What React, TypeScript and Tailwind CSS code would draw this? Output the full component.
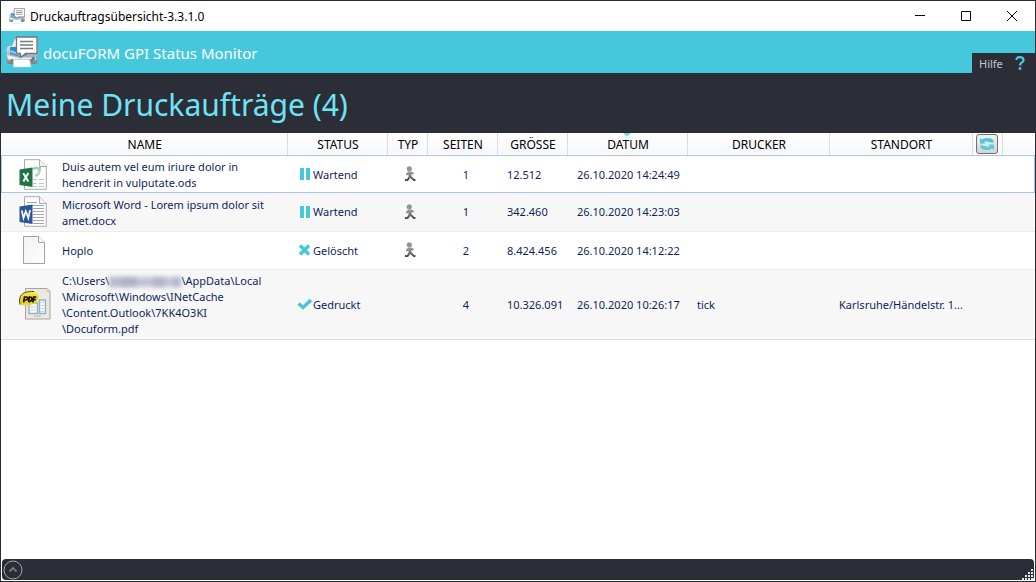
import type { ReactNode } from 'react';

function PrinterIcon({ className }: { className: string }) {
  return (
    <svg viewBox="0 0 32 32" className={className} aria-hidden="true">
      <defs>
        <linearGradient id="printerBody" x1="0" y1="0" x2="0" y2="1">
          <stop offset="0" stopColor="#dfe1e4" />
          <stop offset="0.5" stopColor="#b4b8bd" />
          <stop offset="1" stopColor="#7c8085" />
        </linearGradient>
      </defs>
      <path d="M6 10 9 3h5v9Z" fill="#f1f1f1" stroke="#c3c6c9" strokeWidth="0.6" />
      <path d="M0.500 14Q0.500 10 4 10h24q3.500 0 3.500 4V25q0 3-3 3H3.500q-3 0-3-3Z" fill="url(#printerBody)" />
      <path d="M4 11h17v8l-6 2-11-3Z" fill="#2b8fca" />
      <path d="M3.500 16 14 20l-1-3-8-3Z" fill="#8ccbe9" />
      <path d="M1 19 12 21.500h18v2H2Z" fill="#eceef0" />
      <path d="M5 23.500h22v1.800H5Z" fill="#6a6e73" />
      <path d="M7.500 23.500h16l1.500 7.500h-17.500Z" fill="#ffffff" stroke="#cfd2d5" strokeWidth="0.600" />
      <circle cx="27.300" cy="22.500" r="1.700" fill="#2a8fc5" />
      <path d="M10.500 1h20.500v16.500H19.500L14.500 21.500v-4h-4Z" fill="#ffffff" stroke="#73777b" strokeWidth="1.300" />
      <path d="M14 5.500h13M14 9h13M14 12.500h13" stroke="#777b80" strokeWidth="1.500" />
    </svg>
  );
}

function PageOutline() {
  return (
    <>
      <path d="M5.500 0.700H20.500L27.300 7.500V30.300H5.500Z" fill="#ffffff" stroke="#ababab" />
      <path d="M20.500 0.700V7.500H27.300" fill="#f4f4f4" stroke="#ababab" />
    </>
  );
}

function SheetIcon() {
  return (
    <svg viewBox="0 0 28 31" className="h-[31px] w-7" role="img" aria-label="Tabelle">
      <PageOutline />
      <path d="M14 20.500h4M14 24.500h4M14 27.500h4M20 20.500h5M20 24.500h5M20 27.500h5" stroke="#c3c3c3" />
      <path d="M14 10.500q3-3.500 6 0" fill="none" stroke="#9bd3b2" strokeWidth="2.400" />
      <path d="M19.500 9.500q2.500 5.500-3.500 7.500" fill="none" stroke="#a9dcc0" strokeWidth="2.400" />
      <path d="M17 8h5v5Z" fill="#9bd3b2" />
      <path d="M0.500 10.500 13.500 8.500V28L0.500 26Z" fill="#217346" />
      <path d="m4.300 14.200 5 8.200m0-8.500-5 8.500" stroke="#ffffff" strokeWidth="2" />
    </svg>
  );
}

function WordIcon() {
  return (
    <svg viewBox="0 0 28 31" className="h-[31px] w-7" role="img" aria-label="Dokument">
      <PageOutline />
      <path d="M8 6.500h10M8 9.500h17M14 12.500h11M14 15.500h11M14 18.500h11M14 21.500h11M14 24.500h11M14 27.500h11" stroke="#a5a5a5" />
      <path d="M0.500 10.500 13.500 8.500V28L0.500 26Z" fill="#2b579a" />
      <path d="m2.800 14.500 1.700 7.600 2.300-6.800 2.500 6.800 1.700-8" fill="none" stroke="#ffffff" strokeWidth="1.700" />
    </svg>
  );
}

function BlankIcon() {
  return (
    <svg viewBox="0 0 28 31" className="h-[31px] w-7" role="img" aria-label="Datei">
      <defs>
        <linearGradient id="blankPage" x1="0" y1="0" x2="1" y2="1">
          <stop offset="0" stopColor="#f1f2f4" />
          <stop offset="1" stopColor="#fdfdfd" />
        </linearGradient>
      </defs>
      <path d="M4.500 1.500H19.500L25.500 7.500V28.500H4.500Z" fill="url(#blankPage)" stroke="#a2a2a2" />
      <path d="M19.500 1.500V7.500H25.500" fill="#ffffff" stroke="#a2a2a2" />
    </svg>
  );
}

function PdfIcon() {
  return (
    <svg viewBox="0 0 32 32" className="size-8 max-w-none" role="img" aria-label="PDF">
      <defs>
        <linearGradient id="pdfBadge" x1="0" y1="0" x2="0" y2="1">
          <stop offset="0" stopColor="#f6ec70" />
          <stop offset="0.500" stopColor="#f2d600" />
          <stop offset="1" stopColor="#e8d640" />
        </linearGradient>
      </defs>
      <path d="M6.500 0.500H28L31 3.500V31H6.500Z" fill="#ece8df" stroke="#aaa59c" />
      <path d="M28 0.500V3.500H31Z" fill="#fff" stroke="#b1aca3" strokeWidth="0.700" />
      <path d="M10 15h8.500v10.500h-8.500ZM20.500 12h6v13.500h-6Z" fill="#f8fafa" stroke="#8fb4c8" strokeWidth="1.400" />
      <path d="M21.500 14.500h4M21.500 17.500h4M21.500 20.500h4M21.500 23.500h4M11 19h6M11 22h6" stroke="#c3d7df" />
      <path d="M15 28h7" stroke="#b9b3a9" />
      <path d="M1.500 17Q-0.500 12.500 1.500 8.500C3.500 4.800 8 3.300 14 3.500c4.500 0.300 6 2.500 5.500 6-0.600 4.500-4 7.500-10.300 7.800Q4 17.500 1.500 17Z" fill="url(#pdfBadge)" />
      <path d="M1 16.500Q-0.500 12 1.500 8.200C3.500 4.800 8 3.300 15 3.500" fill="none" stroke="#4a461d" strokeWidth="1" />
      <path d="M4.500 14.500 5.500 9h2q1.700 0.300 1 2-0.500 1.200-3 1.200M9.500 14l0.800-5q3-0.200 2.500 2.200-0.500 2.500-3.300 2.800M13.800 14.500l0.900-5.500h2.600M14.500 11.700h2.300" fill="none" stroke="#171506" strokeWidth="1.700" />
    </svg>
  );
}

function WalkerIcon() {
  return (
    <svg viewBox="0 0 12 16" className="h-4 w-3" role="img" aria-label="Follow-Me">
      <defs>
        <linearGradient id="walker" x1="0" y1="0" x2="0" y2="1">
          <stop offset="0" stopColor="#a0a0a0" />
          <stop offset="1" stopColor="#4a4a4a" />
        </linearGradient>
      </defs>
      <circle cx="5.300" cy="2.800" r="2.600" fill="#959595" />
      <path
        d="M4 5.500h3.500l2.500 1.500-.6 1.400L7.500 7.900V10.200l2.800 2.800H11.500V15H9.500L6.300 11.900 4 15H0.900v-2h2.100L4.500 10.700V8.500L2.700 9.500 1.900 8.300Z"
        fill="url(#walker)"
      />
    </svg>
  );
}

function PauseMark() {
  return (
    <svg viewBox="0 0 16 14" className="h-3.5 w-4 shrink-0" aria-hidden="true">
      <path d="M3 1h4v12H3ZM9 1h4v12h-4Z" fill="#45c7dc" />
    </svg>
  );
}

function CrossMark() {
  return (
    <svg viewBox="0 0 16 14" className="h-3.5 w-4 shrink-0" aria-hidden="true">
      <path d="m3 2.500 9 9m0-9-9 9" stroke="#45c7dc" strokeWidth="3.500" />
    </svg>
  );
}

function CheckMark() {
  return (
    <svg viewBox="0 0 16 14" className="h-3.5 w-4 shrink-0" aria-hidden="true">
      <path d="m1.500 6.500 4.500 4L14 3" fill="none" stroke="#45c7dc" strokeWidth="3.500" />
    </svg>
  );
}

function RefreshIcon() {
  return (
    <svg viewBox="0 0 16 14" className="h-3.5 w-4" aria-hidden="true">
      <path d="M1 6.500V1l1.700 1.500Q7 0 12 1.500l2.500 1.700V6L10 5Q6.500 3.500 5 5l1.500 1.500Z" fill="#48c7dc" />
      <path d="M15 7.500V13l-1.700-1.500Q9 14 4 12.500L1.500 10.800V8L6 9q3.500 1.500 5 0L9.500 7.500Z" fill="#5acbdd" />
    </svg>
  );
}

function Redacted() {
  return (
    <span className="inline-flex h-3 w-[72px] items-center overflow-hidden bg-[#dcdee6] align-middle blur-[2px]" aria-hidden="true">
      <span className="h-2.5 w-3 bg-[#b9bdcc]" />
      <span className="h-2.5 w-4 bg-[#aeb3c5]" />
      <span className="h-2 w-4 bg-[#bfc3d0]" />
      <span className="h-2.5 w-3 bg-[#b1b6c7]" />
      <span className="h-2 w-2 bg-[#c2c5d2]" />
      <span className="h-2.5 w-2 bg-[#b4b9ca]" />
    </span>
  );
}

type Job = {
  id: string;
  icon: ReactNode;
  name: ReactNode;
  mark: ReactNode;
  status: string;
  followMe: boolean;
  pages: number;
  size: string;
  date: string;
  printer: string;
  site: string;
  rowClass: string;
};

const jobs: Job[] = [
  {
    id: 'ods',
    icon: <SheetIcon />,
    name: <>Duis autem vel eum iriure dolor in<br />hendrerit in vulputate.ods</>,
    mark: <PauseMark />,
    status: 'Wartend',
    followMe: true,
    pages: 1,
    size: '12.512',
    date: '26.10.2020 14:24:49',
    printer: '',
    site: '',
    rowClass: 'h-[38px] bg-white outline outline-1 -outline-offset-1 outline-[#a9c4e4]',
  },
  {
    id: 'docx',
    icon: <WordIcon />,
    name: <>Microsoft Word - Lorem ipsum dolor sit<br />amet.docx</>,
    mark: <PauseMark />,
    status: 'Wartend',
    followMe: true,
    pages: 1,
    size: '342.460',
    date: '26.10.2020 14:23:03',
    printer: '',
    site: '',
    rowClass: 'h-[38px] border-b border-[#ececec] bg-[#f7f7f7]',
  },
  {
    id: 'hoplo',
    icon: <BlankIcon />,
    name: 'Hoplo',
    mark: <CrossMark />,
    status: 'Gelöscht',
    followMe: true,
    pages: 2,
    size: '8.424.456',
    date: '26.10.2020 14:12:22',
    printer: '',
    site: '',
    rowClass: 'h-[38px] border-b border-[#ececec] bg-white',
  },
  {
    id: 'pdf',
    icon: <PdfIcon />,
    name: (
      <>
        C:\Users\<Redacted />\AppData\Local<br />\Microsoft\Windows\INetCache<br />\Content.Outlook\7KK4O3KI<br />\Docuform.pdf
      </>
    ),
    mark: <CheckMark />,
    status: 'Gedruckt',
    followMe: false,
    pages: 4,
    size: '10.326.091',
    date: '26.10.2020 10:26:17',
    printer: 'tick',
    site: 'Karlsruhe/Händelstr. 1...',
    rowClass: 'h-[70px] border-b border-[#dedede] bg-[#f7f7f7]',
  },
];

const headCell = 'border-r border-[#dcdde0] p-0 text-center font-normal';
const headText = 'border-r border-[#dcdde0] p-0 pt-0.5 pl-0.5 text-center leading-4 font-normal';
const textCell = 'p-0 pt-0.5 pl-2.5 whitespace-nowrap';

export default function App() {
  return (
    <div className="flex min-h-screen flex-col border border-[#2b2c33] bg-white font-['Noto_Sans','Open_Sans',sans-serif] text-xs text-[#0f1f5c]">
      <div className="flex h-[30px] shrink-0 items-center bg-white pl-2 text-black">
        <PrinterIcon className="size-4" />
        <span className="flex-1 pt-0.5 pl-[5px] whitespace-nowrap">Druckauftragsübersicht-3.3.1.0</span>
        <button type="button" aria-label="Minimieren" className="flex h-full w-[46px] items-center justify-center">
          <svg viewBox="0 0 10 10" className="size-2.5"><path d="M0 4.500h10" stroke="#000" /></svg>
        </button>
        <button type="button" aria-label="Maximieren" className="flex h-full w-[46px] items-center justify-center">
          <svg viewBox="0 0 10 10" className="size-2.5"><path d="M.5.5h9v9h-9Z" fill="none" stroke="#000" /></svg>
        </button>
        <button type="button" aria-label="Schließen" className="flex h-full w-[46px] items-center justify-center">
          <svg viewBox="0 0 10 10" className="size-2.5"><path d="m0 0 10 10m0-10-10 10" stroke="#000" /></svg>
        </button>
      </div>

      <header className="shrink-0">
        <div className="flex h-[42px] items-center bg-[#45c7dc] pl-[5px] text-white">
          <PrinterIcon className="size-8" />
          <span className="flex-1 pt-0.5 pl-[5px] text-[15px] whitespace-nowrap">docuFORM GPI Status Monitor</span>
          <button type="button" className="flex h-5 w-[63px] items-center justify-between self-end bg-[#2b2d37] pr-2.5 pl-[7px] text-[#c4c5c9]">
            <span className="pt-0.5 text-[11px]">Hilfe</span>
            <svg viewBox="0 0 10 14" className="h-3.5 w-2.5" aria-hidden="true">
              <path d="M1.200 3.800Q1.500 1.200 4.800 1.200 8.500 1.200 8.500 4 8.500 5.800 6.500 6.800 5 7.600 5 9.500" fill="none" stroke="#45c7dc" strokeWidth="2.200" />
              <path d="M3.700 11.200h2.600v2.600H3.700Z" fill="#45c7dc" />
            </svg>
          </button>
        </div>
        <div className="flex h-[60px] items-center bg-[#2b2d37] pt-1 pl-[5px]">
          <h1 className="text-[30px] leading-10 whitespace-nowrap text-[#6fe3f6]">Meine Druckaufträge (4)</h1>
        </div>
      </header>

      <main className="flex-1">
        <table className="w-full table-fixed border-collapse text-[11px]">
          <colgroup>
            <col className="w-[286px]" />
            <col className="w-[100px]" />
            <col className="w-10" />
            <col className="w-[70px]" />
            <col className="w-[70px]" />
            <col className="w-[120px]" />
            <col className="w-[142px]" />
            <col className="w-[143px]" />
            <col className="w-[30px]" />
            <col />
          </colgroup>
          <thead className="text-xs">
            <tr className="h-[22px] border-b border-[#d5dfeb] bg-linear-to-b from-white to-[#f6f7f9] text-black">
              <th className={headText}>NAME</th>
              <th className={headText}>STATUS</th>
              <th className={headText}>TYP</th>
              <th className={headText}>SEITEN</th>
              <th className={headText}>GRÖSSE</th>
              <th className={`relative ${headText}`} aria-sort="descending">
                <svg viewBox="0 0 8 4" className="absolute top-0 left-1/2 h-1 w-2 -translate-x-1/2" aria-hidden="true">
                  <path d="M0 0h8L4 3.500Z" fill="#6fd6e6" />
                </svg>
                DATUM
              </th>
              <th className={headText}>DRUCKER</th>
              <th className={headText}>STANDORT</th>
              <th className={headCell}>
                <button
                  type="button"
                  aria-label="Aktualisieren"
                  className="mx-auto flex h-5 w-[22px] items-center justify-center rounded-[3px] border border-[#707070] bg-linear-to-b from-[#f2f2f2] to-[#d4d4d4]"
                >
                  <RefreshIcon />
                </button>
              </th>
              <th className="p-0" />
            </tr>
          </thead>
          <tbody>
            {jobs.map((job) => (
              <tr key={job.id} className={job.rowClass}>
                <td className="p-0">
                  <div className="flex items-center">
                    <div className="flex w-[61px] shrink-0 pl-[18px]">{job.icon}</div>
                    <div className="pt-0.5 leading-4 whitespace-nowrap">{job.name}</div>
                  </div>
                </td>
                <td className="p-0">
                  <div className="flex items-center pl-2.5">
                    {job.mark}
                    <span className="pt-0.5">{job.status}</span>
                  </div>
                </td>
                <td className="p-0">
                  <div className="flex justify-center pl-1.5">{job.followMe && <WalkerIcon />}</div>
                </td>
                <td className="p-0 pt-0.5 pl-2 text-center">{job.pages}</td>
                <td className={textCell}>{job.size}</td>
                <td className={textCell}>{job.date}</td>
                <td className={textCell}>{job.printer}</td>
                <td className={textCell}>{job.site}</td>
                <td className="p-0" />
                <td className="p-0" />
              </tr>
            ))}
          </tbody>
        </table>
      </main>

      <footer className="mx-px mb-px flex h-[21px] shrink-0 items-center justify-between rounded-sm bg-[#2b2d37]">
        <button type="button" aria-label="Details einblenden" className="flex size-[21px] items-center justify-center">
          <svg viewBox="0 0 20 20" className="size-5">
            <circle cx="10" cy="10" r="9" fill="none" stroke="#a7a8ad" />
            <path d="m6.500 11.500 3.500-3.500 3.500 3.500" fill="none" stroke="#77787e" strokeWidth="1.800" />
          </svg>
        </button>
        <svg viewBox="0 0 12 12" className="size-3 self-end" aria-hidden="true">
          <path
            d="M0 10h2v2H0ZM3 10h2v2H3ZM6 10h2v2H6ZM9 10h2v2H9ZM3 7h2v2H3ZM6 7h2v2H6ZM9 7h2v2H9ZM6 4h2v2H6ZM9 4h2v2H9ZM9 1h2v2H9Z"
            fill="#e3e3e6"
          />
        </svg>
      </footer>
    </div>
  );
}
